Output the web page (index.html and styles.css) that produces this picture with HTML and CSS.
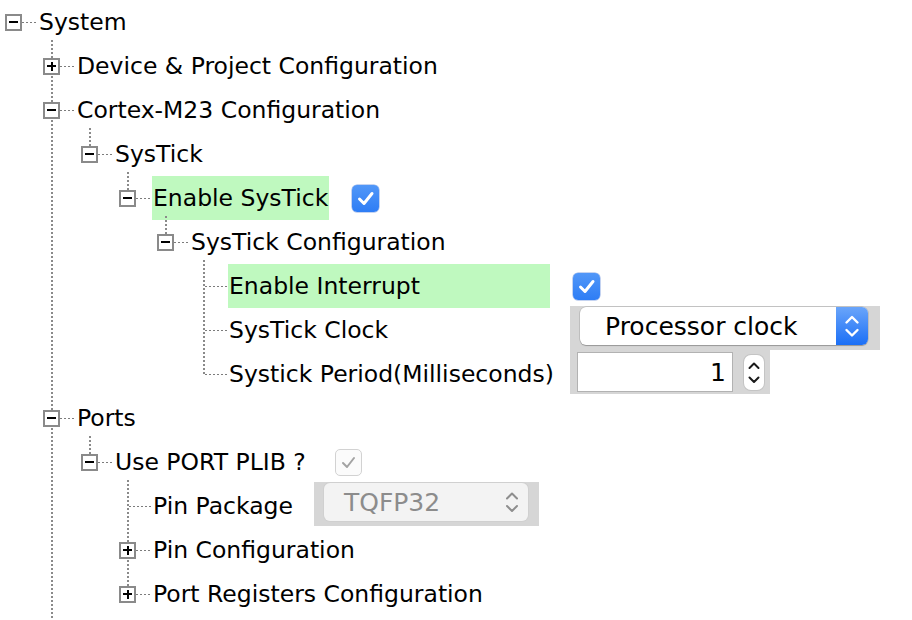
FILE: index.html
```html
<!DOCTYPE html>
<html>
<head>
<meta charset="utf-8">
<link rel="stylesheet" href="styles.css">
</head>
<body>
<div class="tree">
  <div class="node">
    <div class="row"><span class="exp minus"></span><span class="conn"></span><span class="label">System</span></div>
    <div class="children">
      <div class="node">
        <div class="row"><span class="exp plus"></span><span class="conn"></span><span class="label">Device &amp; Project Configuration</span></div>
      </div>
      <div class="node">
        <div class="row"><span class="exp minus"></span><span class="conn"></span><span class="label">Cortex-M23 Configuration</span></div>
        <div class="children">
          <div class="node last">
            <div class="row"><span class="exp minus"></span><span class="conn"></span><span class="label">SysTick</span></div>
            <div class="children">
              <div class="node last">
                <div class="row">
                  <span class="exp minus"></span><span class="conn"></span><span class="label hl">Enable SysTick</span>
                  <span class="cb on"><svg width="27" height="27" viewBox="0 0 27 27"><polyline points="7.5,14 12,18.5 20,8.5" fill="none" stroke="#fff" stroke-width="3" stroke-linecap="round" stroke-linejoin="round"/></svg></span>
                </div>
                <div class="children">
                  <div class="node last">
                    <div class="row"><span class="exp minus"></span><span class="conn"></span><span class="label">SysTick Configuration</span></div>
                    <div class="children">
                      <div class="node">
                        <div class="row">
                          <span class="gap"></span><span class="conn long"></span><span class="label hl wide">Enable Interrupt</span>
                          <span class="cb on"><svg width="27" height="27" viewBox="0 0 27 27"><polyline points="7.5,14 12,18.5 20,8.5" fill="none" stroke="#fff" stroke-width="3" stroke-linecap="round" stroke-linejoin="round"/></svg></span>
                        </div>
                      </div>
                      <div class="node">
                        <div class="row">
                          <span class="gap"></span><span class="conn long"></span><span class="label wide">SysTick Clock</span>
                          <div class="panel combo-panel">
                            <div class="combo">
                              <span class="combo-text">Processor clock</span>
                              <span class="combo-arrows"><svg width="32" height="38" viewBox="0 0 32 38"><polyline points="10.5,15.5 16,10 21.5,15.5" fill="none" stroke="#fff" stroke-width="2.4" stroke-linecap="round" stroke-linejoin="round"/><polyline points="10.5,23 16,28.5 21.5,23" fill="none" stroke="#fff" stroke-width="2.4" stroke-linecap="round" stroke-linejoin="round"/></svg></span>
                            </div>
                          </div>
                        </div>
                      </div>
                      <div class="node last">
                        <div class="row">
                          <span class="gap"></span><span class="conn long"></span><span class="label wide">Systick Period(Milliseconds)</span>
                          <div class="panel spin-panel">
                            <div class="field">1</div>
                            <div class="stepper"><svg width="20" height="35" viewBox="0 0 20 35"><polyline points="5.5,13 10,8.5 14.5,13" fill="none" stroke="#1a1a1a" stroke-width="2" stroke-linecap="round" stroke-linejoin="round"/><polyline points="5.5,22.5 10,27 14.5,22.5" fill="none" stroke="#1a1a1a" stroke-width="2" stroke-linecap="round" stroke-linejoin="round"/></svg></div>
                          </div>
                        </div>
                      </div>
                    </div>
                  </div>
                </div>
              </div>
            </div>
          </div>
        </div>
      </div>
      <div class="node">
        <div class="row"><span class="exp minus"></span><span class="conn"></span><span class="label">Ports</span></div>
        <div class="children">
          <div class="node last">
            <div class="row">
              <span class="exp minus"></span><span class="conn"></span><span class="label">Use PORT PLIB ?</span>
              <span class="cb dis wider"><svg width="25" height="25" viewBox="0 0 25 25"><polyline points="7,13 11,17 18,8" fill="none" stroke="#a3a3a3" stroke-width="2" stroke-linecap="round" stroke-linejoin="round"/></svg></span>
            </div>
            <div class="children">
              <div class="node">
                <div class="row">
                  <span class="gap"></span><span class="conn long"></span><span class="label">Pin Package</span>
                  <div class="panel combo-panel dis-panel">
                    <div class="combo dis">
                      <span class="combo-text">TQFP32</span>
                      <span class="combo-arrows"><svg width="32" height="38" viewBox="0 0 32 38"><polyline points="11,15.5 16,10.5 21,15.5" fill="none" stroke="#8e8e8e" stroke-width="2" stroke-linecap="round" stroke-linejoin="round"/><polyline points="11,23 16,28 21,23" fill="none" stroke="#8e8e8e" stroke-width="2" stroke-linecap="round" stroke-linejoin="round"/></svg></span>
                    </div>
                  </div>
                </div>
              </div>
              <div class="node">
                <div class="row"><span class="exp plus"></span><span class="conn"></span><span class="label">Pin Configuration</span></div>
              </div>
              <div class="node last">
                <div class="row"><span class="exp plus"></span><span class="conn"></span><span class="label">Port Registers Configuration</span></div>
              </div>
            </div>
          </div>
        </div>
      </div>
      <div class="tail"></div>
    </div>
  </div>
</div>
</body>
</html>
```

FILE: styles.css
```css
html, body {
  margin: 0;
  padding: 0;
  background: #ffffff;
}

body {
  font-family: "DejaVu Sans", "Liberation Sans", sans-serif;
  font-size: 23.5px;
  color: #000000;
  overflow: hidden;
  height: 620px;
}

.tree {
  padding-left: 5px;
}

.node {
  position: relative;
}

.row {
  display: flex;
  align-items: center;
  height: 44px;
}

.exp {
  flex: none;
  width: 17px;
  height: 17px;
  box-sizing: border-box;
  border: 2px solid #8a8a8a;
  background: #ffffff;
  position: relative;
  z-index: 1;
}

.exp::before {
  content: "";
  position: absolute;
  left: 2px;
  top: 5.5px;
  width: 9px;
  height: 2px;
  background: #000000;
}

.exp.plus::after {
  content: "";
  position: absolute;
  left: 5.5px;
  top: 2px;
  width: 2px;
  height: 9px;
  background: #000000;
}

.conn {
  flex: none;
  width: 16px;
  height: 1px;
  background: repeating-linear-gradient(to right, #7c7c7c 0 2px, transparent 2px 4px);
}

.conn.long {
  width: 23px;
}

.gap {
  flex: none;
  width: 10px;
}

.label {
  display: flex;
  align-items: center;
  height: 44px;
  padding: 0 1px;
  white-space: nowrap;
  box-sizing: border-box;
}

.hl {
  background: #bff9bf;
}

.wide {
  width: 322px;
  flex: none;
}

.children {
  padding-left: 38px;
}

.children > .node::before,
.tail::before {
  content: "";
  position: absolute;
  left: 8px;
  top: -4px;
  bottom: 0;
  width: 2px;
  background: repeating-linear-gradient(to bottom, #8a8a8a 0 2px, transparent 2px 4px);
}

.children > .node.last::before {
  bottom: auto;
  height: 26px;
}

.tail {
  position: relative;
  height: 12px;
}

/* checkboxes */
.cb {
  flex: none;
  width: 27px;
  height: 27px;
  margin-left: 23px;
  border-radius: 5px;
  box-sizing: border-box;
  display: flex;
  align-items: center;
  justify-content: center;
}

.cb.on {
  background: linear-gradient(#5197f8, #2e7df5);
  box-shadow: 0 0 0 0.5px rgba(20, 80, 200, 0.5);
}

.cb.dis {
  background: #fbfbfb;
  border: 1px solid #d2d2d2;
}

.cb.wider {
  margin-left: 28px;
}

/* gray control panels */
.panel {
  flex: none;
  display: flex;
  align-self: flex-start;
  height: 44px;
  margin-top: -2px;
  margin-left: 20px;
  background: #d6d6d6;
  box-sizing: border-box;
}

.combo-panel {
  padding: 1px 12px 0 10px;
}

.dis-panel {
  padding: 1px 11px 0 10px;
}

.combo {
  display: flex;
  width: 288px;
  height: 38px;
  border-radius: 6px;
  background: #ffffff;
  box-shadow: 0 0 0 0.5px rgba(0, 0, 0, 0.18), 0 1px 1px rgba(0, 0, 0, 0.22);
  font-size: 25px;
  overflow: hidden;
}

.combo-text {
  flex: 1;
  display: flex;
  align-items: center;
  padding-left: 25px;
  white-space: nowrap;
}

.combo-arrows {
  flex: none;
  width: 32px;
  height: 38px;
  background: linear-gradient(#6aa5fa, #1b6ff6);
}

.combo.dis {
  width: 204px;
  background: #f3f3f3;
  box-shadow: 0 0 0 1px #d0d0d0;
  color: #8c8c8c;
}

.combo.dis .combo-text {
  padding-left: 20px;
}

.combo.dis .combo-arrows {
  background: none;
}

/* spinner */
.spin-panel {
  width: 200px;
  padding: 2px 0 0 7px;
}

.field {
  width: 156px;
  height: 40px;
  box-sizing: border-box;
  border: 1px solid #b2b2b2;
  background: #ffffff;
  font-size: 25px;
  display: flex;
  align-items: center;
  justify-content: flex-end;
  padding-right: 6px;
}

.stepper {
  width: 20px;
  height: 35px;
  margin: 3px 0 0 11px;
  border-radius: 7px;
  background: #ffffff;
  box-shadow: 0 0 0 1px #c4c4c4;
}

.stepper svg {
  display: block;
}
```
